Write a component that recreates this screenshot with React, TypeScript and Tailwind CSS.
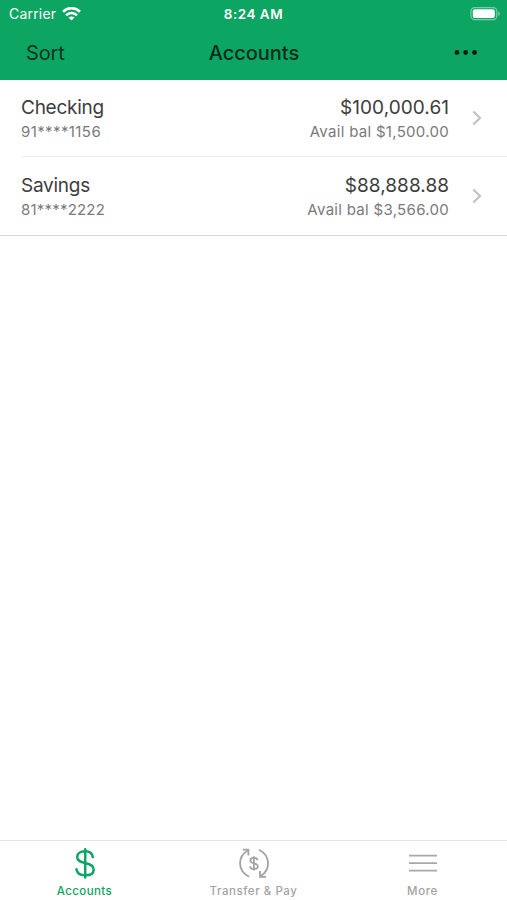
import type { ReactNode } from "react";

interface Account {
  name: string;
  mask: string;
  maskClass: string;
  balance: string;
  available: string;
}

const ACCOUNTS: Account[] = [
  {
    name: "Checking",
    mask: "91****1156",
    maskClass: "tracking-[0.4px]",
    balance: "$100,000.61",
    available: "Avail bal $1,500.00",
  },
  {
    name: "Savings",
    mask: "81****2222",
    maskClass: "tracking-[0.2px]",
    balance: "$88,888.88",
    available: "Avail bal $3,566.00",
  },
];

function WifiIcon() {
  return (
    <svg width="19" height="14" viewBox="0 0 19 14" fill="none" stroke="#fff" strokeWidth="2.6">
      <path d="M1 4.8C5.8 0.1 13.2 0.1 18 4.8" />
      <path d="M4 8.3C7.1 5.3 11.9 5.3 15 8.3" />
      <path d="M9.5 13.4L6.5 10.5C8.2 9.1 10.8 9.1 12.5 10.5Z" fill="#fff" stroke="none" />
    </svg>
  );
}

function BatteryIcon() {
  return (
    <svg width="31" height="14" viewBox="0 0 31 14" fill="none">
      <rect x="1" y="0.7" width="25.8" height="12" rx="3.6" stroke="#fff" strokeOpacity="0.45" strokeWidth="1.2" />
      <rect x="2.8" y="2.3" width="22" height="8.8" rx="2" fill="#fff" />
      <path d="M28.3 4.6V9C29.2 8.6 29.8 7.8 29.8 6.8S29.2 5 28.3 4.6Z" fill="#fff" fillOpacity="0.5" />
    </svg>
  );
}

function DollarIcon() {
  return (
    <svg width="20" height="32" viewBox="0 0 20 32" fill="none" stroke="#0da562" strokeWidth="2.5" strokeLinecap="round">
      <path d="M10.2 2.2V30.6" />
      <path d="M17.8 10.2C17.4 6.4 14.6 4.2 10.2 4.2C5.4 4.2 2.2 6.4 2.2 9.9C2.2 13.6 5 14.8 10.2 16C15.6 17.3 18.7 18.6 18.7 22.4C18.7 26.2 15.4 28.3 10.3 28.3C5.2 28.3 1.8 26 1.5 22.2" />
    </svg>
  );
}

function TransferIcon() {
  return (
    <svg width="32" height="32" viewBox="0 0 32 32" fill="none" stroke="#a3a3a3" strokeWidth="1.8">
      <path d="M11.2 29.8C-1 23.4 -0.6 9.6 10 3.2" />
      <path d="M4.8 2.7H10.4V8.6" />
      <path d="M21 2.7C33 8.8 32.6 23.4 22.4 29.4" />
      <path d="M28 29.9H22V24" />
      <path
        d="M15.9 9.2V23.6M19.5 13.2C19.3 11.6 17.9 10.8 15.9 10.8C13.8 10.8 12.3 11.8 12.3 13.4C12.3 15.2 13.8 15.8 15.9 16.3C18.1 16.8 19.8 17.4 19.8 19.2C19.8 21 18.2 22 15.9 22C13.7 22 12.1 21 12 19.2"
        strokeWidth="1.7"
      />
    </svg>
  );
}

function MenuIcon() {
  return (
    <svg width="30" height="32" viewBox="0 0 30 32" fill="none" stroke="#a8a8a8" strokeWidth="1.8">
      <path d="M1 8.7H29M1 16.2H29M1 23.6H29" />
    </svg>
  );
}

function AccountRow({ account }: { account: Account }) {
  return (
    <div className="flex h-[76px] items-center pr-[25px]">
      <div className="flex-1 pt-[3px]">
        <div className="text-[19px] leading-6 tracking-[-0.25px] text-[#3d3d3d]">{account.name}</div>
        <div className={`text-[15px] leading-6 text-[#7a7a7a] ${account.maskClass}`}>{account.mask}</div>
      </div>
      <div className="pt-[3px] text-right">
        <div className="text-[19px] leading-6 tracking-[0.05px] text-[#3d3d3d]">{account.balance}</div>
        <div className="text-[15px] leading-6 tracking-[0.3px] text-[#7a7a7a]">{account.available}</div>
      </div>
      <svg className="ml-[23px]" width="10" height="16" viewBox="0 0 10 16" fill="none" stroke="#c2c2c2" strokeWidth="2.2">
        <path d="M1.3 1.5L8 8L1.3 14.5" />
      </svg>
    </div>
  );
}

function Tab({ label, labelClass, children }: { label: string; labelClass: string; children: ReactNode }) {
  return (
    <div className="flex flex-1 flex-col items-center pt-[6px]">
      {children}
      <span className={`mt-[4px] text-[11.5px] leading-4 font-medium ${labelClass}`}>{label}</span>
    </div>
  );
}

export default function App() {
  return (
    <div className="flex h-[900px] w-[507px] flex-col overflow-hidden bg-white font-['Inter','Liberation_Sans',sans-serif]">
      <header className="h-20 bg-[#0da562]">
        {/* Status bar */}
        <div className="grid h-[27px] grid-cols-[1fr_auto_1fr] items-center pr-[6px] pl-[9px] text-[14px] text-white">
          <div className="flex items-center gap-[6px]">
            <span className="tracking-[0.2px]">Carrier</span>
            <WifiIcon />
          </div>
          <span className="pt-[1px] pr-[3px] text-center text-[13.5px] font-semibold tracking-[0.5px]">8:24 AM</span>
          <div className="flex justify-end">
            <BatteryIcon />
          </div>
        </div>
        {/* Navigation bar */}
        <div className="grid h-[51px] grid-cols-[1fr_auto_1fr] items-center px-[26px] text-[20px] text-[#08331f]">
          <span className="tracking-[-0.1px]">Sort</span>
          <span className="pl-[1px] font-[450] tracking-[-0.05px] text-[#082c1b]">Accounts</span>
          <svg className="mr-[3px] justify-self-end" width="24" height="6" viewBox="0 0 24 6" fill="#061c12">
            <circle cx="3" cy="2.5" r="2.4" />
            <circle cx="11.7" cy="2.5" r="2.4" />
            <circle cx="20.5" cy="2.5" r="2.4" />
          </svg>
        </div>
      </header>

      <main className="flex-1">
        <div className="border-b border-[#d8d8d8] pb-[1px] pl-[21px]">
          <div className="border-b border-[#ededed]">
            <AccountRow account={ACCOUNTS[0]} />
          </div>
          <div className="pt-[1px]">
            <AccountRow account={ACCOUNTS[1]} />
          </div>
        </div>
      </main>

      <nav className="flex h-[60px] border-t border-[#e4e4e4]">
        <Tab label="Accounts" labelClass="tracking-[0.4px] text-[#0da562]">
          <DollarIcon />
        </Tab>
        <Tab label="Transfer & Pay" labelClass="tracking-[0.55px] text-[#a3a3a3]">
          <TransferIcon />
        </Tab>
        <Tab label="More" labelClass="tracking-[0.6px] text-[#a3a3a3]">
          <MenuIcon />
        </Tab>
      </nav>
    </div>
  );
}
